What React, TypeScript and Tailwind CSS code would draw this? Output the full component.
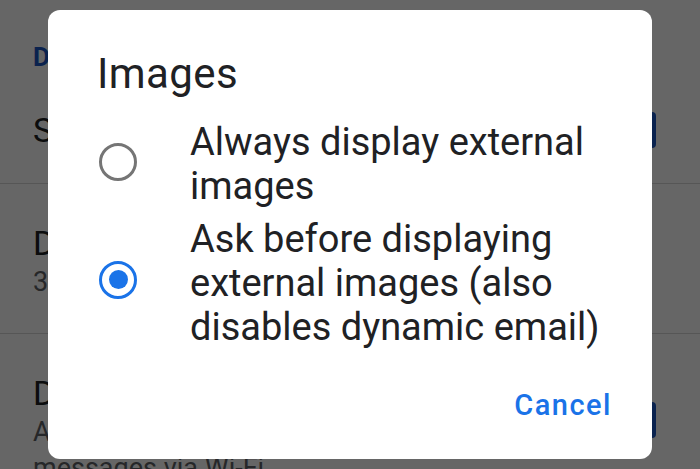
import React from 'react'

const font = { fontFamily: 'Roboto, "Noto Sans", sans-serif' }

function Radio({ checked }: { checked: boolean }) {
  return (
    <div
      className={
        checked
          ? 'flex h-[38px] w-[38px] items-center justify-center rounded-full border-[3.5px] border-[#1a73e8]'
          : 'flex h-[38px] w-[38px] items-center justify-center rounded-full border-[3px] border-[#757575]'
      }
    >
      {checked && <div className="h-[19px] w-[19px] rounded-full bg-[#1a73e8]" />}
    </div>
  )
}

export default function App() {
  return (
    <div className="relative h-[469px] w-[700px] overflow-hidden bg-white text-[#202124]" style={font}>
      {/* settings page behind the dialog */}
      <div className="flex flex-col">
        <div className="pl-[33px] pt-[42px] text-[26px] font-bold leading-[30px] text-[#1a56c4]">Data usage</div>
        <div className="flex items-center justify-between pl-[33px] pt-[38px] pb-[33px]">
          <span className="text-[34px] leading-[40px]">Sync Gmail</span>
          <div className="mr-[44px] h-[36px] w-[36px] rounded-[4px] bg-[#1a56c4]" />
        </div>
        <div className="h-px bg-[#d7d7d7]" />
        <div className="flex flex-col pl-[33px] pt-[38px] pb-[33px]">
          <span className="text-[34px] leading-[42px]">Days of mail to sync</span>
          <span className="text-[27px] leading-[36px] text-[#5f6368]">30 days</span>
        </div>
        <div className="h-px bg-[#d7d7d7]" />
        <div className="flex items-start justify-between pl-[33px] pt-[38px]">
          <div className="flex flex-col">
            <span className="text-[34px] leading-[42px]">Download attachments</span>
            <span className="text-[27px] leading-[36px] text-[#5f6368]">Auto-download attachments to recently viewed</span>
            <span className="text-[27px] leading-[36px] text-[#5f6368]">messages via Wi-Fi</span>
          </div>
          <div className="mr-[44px] mt-[30px] h-[36px] w-[36px] shrink-0 rounded-[4px] bg-[#1a56c4]" />
        </div>
      </div>

      {/* scrim + dialog */}
      <div className="absolute inset-0 bg-black/60 pl-[48px] pt-[10px]">
        <div className="flex h-[449px] w-[604px] flex-col rounded-[12px] bg-white pl-[49px] pr-[40px]">
          <div className="pt-[39px] text-[42px] leading-[50px] tracking-[0.4px] text-[#202124]">Images</div>
          <div className="mt-[21px] flex items-center">
            <div className="mb-[5px] w-[93px] pl-[2px]">
              <Radio checked={false} />
            </div>
            <div className="text-[38px] leading-[44px] text-[#202124]">
              Always display external
              <br />
              images
            </div>
          </div>
          <div className="mt-[9px] flex items-center">
            <div className="mb-[7px] w-[93px] pl-[2px]">
              <Radio checked />
            </div>
            <div className="text-[38px] leading-[44px] text-[#202124]">
              Ask before displaying
              <br />
              external images (also
              <br />
              disables dynamic email)
            </div>
          </div>
          <div className="mt-[38px] flex justify-end">
            <span className="text-[29px] font-medium leading-[36px] tracking-[1.5px] text-[#1a73e8]">Cancel</span>
          </div>
        </div>
      </div>
    </div>
  )
}
